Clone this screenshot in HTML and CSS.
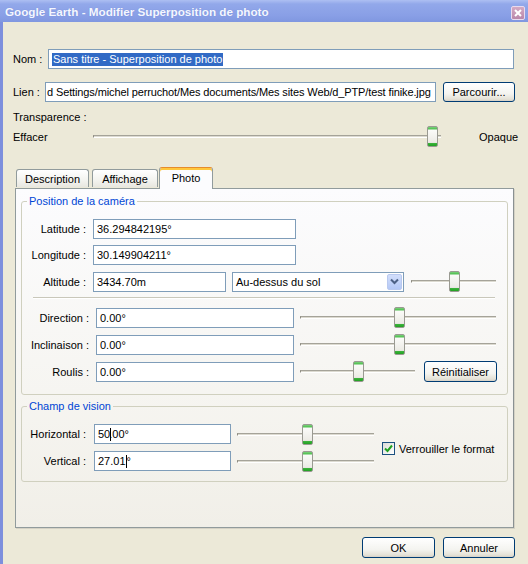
FILE: index.html
```html
<!DOCTYPE html>
<html lang="fr">
<head>
<meta charset="UTF-8" />
<title>Google Earth - Modifier Superposition de photo</title>
<link rel="stylesheet" href="styles.css">
</head>
<body>
  <div class="window">
    <div class="titlebar">
      <span class="title">Google Earth - Modifier Superposition de photo</span>
      <span class="close">
        <svg width="8" height="8" viewBox="0 0 8 8"><path d="M1 1 L7 7 M7 1 L1 7" stroke="#fff" stroke-width="2" /></svg>
      </span>
    </div>

    <div class="frame">
      <div class="row row-nom">
        <span class="lbl lbl-nom">Nom :</span>
        <div class="field field-nom"><span class="selected">Sans titre - Superposition de photo</span></div>
      </div>

      <div class="row row-lien">
        <span class="lbl lbl-lien">Lien :</span>
        <div class="field field-lien"><span>d Settings/michel perruchot/Mes documents/Mes sites Web/d_PTP/test finike.jpg</span></div>
        <div class="btn btn-browse">Parcourir...</div>
      </div>

      <div class="transp">Transparence :</div>

      <div class="row row-opacity">
        <span class="lbl lbl-effacer">Effacer</span>
        <div class="slider slider-opacity"><div class="track"></div><div class="thumb" style="left: 334px"></div></div>
        <span class="opaque">Opaque</span>
      </div>

      <div class="tabs">
        <div class="tab tab-desc">Description</div>
        <div class="tab tab-aff">Affichage</div>
        <div class="tab tab-photo active">Photo</div>
      </div>

      <div class="panel">
        <fieldset class="group group-cam">
          <legend>Position de la caméra</legend>

          <div class="row row-cam">
            <span class="lbl lbl-cam">Latitude :</span>
            <div class="field field-coord">36.294842195°</div>
          </div>
          <div class="row row-cam">
            <span class="lbl lbl-cam">Longitude :</span>
            <div class="field field-coord">30.149904211°</div>
          </div>
          <div class="row row-cam row-alt">
            <span class="lbl lbl-cam">Altitude :</span>
            <div class="field field-alt">3434.70m</div>
            <div class="field combo">
              <span>Au-dessus du sol</span>
              <span class="combo-btn">
                <svg width="9" height="7" viewBox="0 0 9 7"><path d="M1 1.5 L4.5 5 L8 1.5" fill="none" stroke="#4d6185" stroke-width="2" /></svg>
              </span>
            </div>
            <div class="slider slider-alt"><div class="track"></div><div class="thumb" style="left: 38px"></div></div>
          </div>

          <div class="sep"></div>

          <div class="row row-orient">
            <span class="lbl lbl-orient">Direction :</span>
            <div class="field field-orient">0.00°</div>
            <div class="slider slider-orient"><div class="track"></div><div class="thumb" style="left: 94px"></div></div>
          </div>
          <div class="row row-orient">
            <span class="lbl lbl-orient">Inclinaison :</span>
            <div class="field field-orient">0.00°</div>
            <div class="slider slider-orient"><div class="track"></div><div class="thumb" style="left: 94px"></div></div>
          </div>
          <div class="row row-orient">
            <span class="lbl lbl-orient">Roulis :</span>
            <div class="field field-orient">0.00°</div>
            <div class="slider slider-roll"><div class="track"></div><div class="thumb" style="left: 53px"></div></div>
            <div class="btn btn-reset">Réinitialiser</div>
          </div>
        </fieldset>

        <fieldset class="group group-fov">
          <legend>Champ de vision</legend>
          <div class="fov-grid">
            <span class="lbl lbl-fov">Horizontal :</span>
            <div class="field field-fov">50<span class="caret caret-h"></span>.00°</div>
            <div class="slider slider-fov"><div class="track"></div><div class="thumb" style="left: 65px"></div></div>

            <span class="lbl lbl-fov">Vertical :</span>
            <div class="field field-fov">27.01<span class="caret"></span>°</div>
            <div class="slider slider-fov"><div class="track"></div><div class="thumb" style="left: 65px"></div></div>

            <label class="check">
              <span class="box">
                <svg width="9" height="9" viewBox="0 0 9 9"><path d="M1 4.5 L3.5 7 L8 1.5" fill="none" stroke="#21a121" stroke-width="2" /></svg>
              </span>
              Verrouiller le format
            </label>
          </div>
        </fieldset>
      </div>

      <div class="footer">
        <div class="btn btn-ok">OK</div>
        <div class="btn btn-cancel">Annuler</div>
      </div>
    </div>
  </div>
</body>
</html>
```

FILE: styles.css
```css
body {
  margin: 0;
  font-family: "Liberation Sans", Arial, sans-serif;
  font-size: 11px;
  color: #000;
  background: #ece9d8;
}

.window {
  width: 528px;
  height: 564px;
  display: flex;
  flex-direction: column;
  overflow: hidden;
}

.titlebar {
  height: 22px;
  flex-shrink: 0;
  display: flex;
  align-items: center;
  justify-content: space-between;
  padding: 0 3px 0 5px;
  background: linear-gradient(#adbff2, #92a8ea 4px, #899fe6 70%, #8097e0);
}

.title {
  color: #f4f7ff;
  font-weight: bold;
  font-size: 11.7px;
  text-shadow: 0 0 1px #7387d3;
}

.close {
  width: 12px;
  height: 12px;
  margin-top: 3px;
  display: flex;
  align-items: center;
  justify-content: center;
  background: linear-gradient(#d4aac4, #b987aa);
  border: 1px solid #e9dbee;
  border-radius: 2px;
}

.frame {
  flex: 1;
  border-left: 3px solid #7d8fdd;
  padding: 0 14px 0 10px;
}

.row {
  display: flex;
  align-items: center;
}

.lbl {
  flex-shrink: 0;
  white-space: nowrap;
}

.field {
  height: 20px;
  box-sizing: border-box;
  border: 1px solid #7f9db9;
  background: #fff;
  padding: 0 3px;
  display: flex;
  align-items: center;
  white-space: nowrap;
  overflow: hidden;
  flex-shrink: 0;
}

.btn {
  box-sizing: border-box;
  height: 21px;
  border: 1px solid #003c74;
  border-radius: 3px;
  background: linear-gradient(#ffffff, #f4f4f0 60%, #e4e1d6 90%, #d6d0c5);
  display: flex;
  align-items: center;
  justify-content: center;
  flex-shrink: 0;
}

/* haut du dialogue */
.row-nom { margin-top: 27px; height: 20px; }
.lbl-nom { width: 35px; }
.field-nom { flex: 1; padding-left: 3px; }
.selected {
  background: #316ac5;
  color: #fff;
  line-height: 13px;
  padding: 0 1px;
}

.row-lien { margin-top: 13px; height: 20px; }
.lbl-lien { width: 32px; }
.field-lien {
  width: 391px;
  padding-left: 1px;
  letter-spacing: -0.12px;
}
.btn-browse { width: 72px; height: 20px; margin-left: 7px; }

.transp {
  margin-top: 9px;
  line-height: 13px;
}

.row-opacity { margin-top: 2px; height: 21px; }
.lbl-effacer { width: 80px; }
.slider-opacity { width: 348px; }
.opaque { margin-left: 38px; }

/* curseurs */
.slider {
  position: relative;
  height: 21px;
  flex-shrink: 0;
  display: flex;
  align-items: center;
}

.track {
  width: 100%;
  height: 1px;
  border-top: 1px solid #a5a399;
  border-bottom: 1px solid #fff;
  border-left: 1px solid #8d8b82;
  background: #dcdad0;
}

.thumb {
  position: absolute;
  top: 0;
  width: 11px;
  height: 21px;
  box-sizing: border-box;
  border: 1px solid #9a9a92;
  border-radius: 2px;
  background: linear-gradient(#7bd07b 0, #4fbf4f 2px, #fbfbf9 3px, #ecebe5 80%, #e0dfd8 calc(100% - 3px), #3fb43f calc(100% - 3px), #21a121);
}

/* onglets */
.tabs {
  margin-top: 20px;
  margin-left: 3px;
  height: 21px;
  display: flex;
  align-items: flex-end;
  position: relative;
  z-index: 1;
}

.tab {
  box-sizing: border-box;
  height: 18px;
  border: 1px solid #919b9c;
  border-bottom: none;
  border-radius: 3px 3px 0 0;
  background: linear-gradient(#ffffff, #f3f3ef 60%, #e8e7e0);
  display: flex;
  align-items: center;
  justify-content: center;
  margin-bottom: 1px;
}

.tab-desc { width: 73px; }
.tab-aff { width: 66px; margin-left: 3px; }
.tab-photo { width: 54px; margin-left: 1px; }

.tab.active {
  height: 22px;
  margin-bottom: -1px;
  background: #fcfcfe;
  border-top: 1px solid #e68b2c;
  box-shadow: inset 0 2px #ffc73c;
  padding-bottom: 2px;
}

.panel {
  margin-left: 2px;
  height: 340px;
  box-sizing: border-box;
  border: 1px solid #919b9c;
  border-right-color: #8a9192;
  background: linear-gradient(#fcfcfe, #f6f5f1 60%, #f1efe8);
  padding: 6px 5px 0 5px;
  box-shadow: 1px 1px 0 #d5d2c5;
}

/* cadres */
.group {
  margin: 0;
  padding: 0;
  border: 1px solid #d0d0bf;
  border-radius: 3px;
  min-width: 0;
}

.group legend {
  margin-left: 5px;
  padding: 0 2px;
  line-height: 13px;
  color: #0046d5;
}

.group-cam { padding-bottom: 12px; }

.row-cam { height: 20px; margin-top: 6px; }
.row-cam:first-of-type { margin-top: 11px; }
.row-alt { height: 21px; }
.lbl-cam { width: 64px; text-align: right; }
.field-coord { width: 203px; margin-left: 7px; }
.field-alt { width: 133px; margin-left: 7px; }

.combo {
  width: 172px;
  margin-left: 6px;
  justify-content: space-between;
  padding-right: 1px;
}

.combo-btn {
  width: 15px;
  height: 16px;
  box-sizing: border-box;
  border: 1px solid #b9c9ef;
  border-radius: 2px;
  background: linear-gradient(#d2defb, #b4c8f6);
  display: flex;
  align-items: center;
  justify-content: center;
}

.slider-alt { width: 85px; margin-left: 7px; }

.sep {
  margin: 5px 12px 0 11px;
  border-top: 1px solid #c9c7ba;
  border-bottom: 1px solid #fff;
}

.row-orient { height: 21px; margin-top: 6px; }
.sep + .row-orient { margin-top: 8px; }
.lbl-orient { width: 67px; text-align: right; }
.field-orient { width: 198px; margin-left: 7px; }
.slider-orient { width: 196px; margin-left: 6px; }
.slider-roll { width: 115px; margin-left: 6px; }
.btn-reset { width: 73px; margin-left: 9px; }

.group-fov {
  margin-top: 5px;
  padding-bottom: 10px;
}

.fov-grid {
  display: grid;
  grid-template-columns: 64px 137px 137px auto;
  grid-template-rows: 20px 20px;
  row-gap: 7px;
  margin-top: 11px;
  align-items: center;
}

.lbl-fov { text-align: right; }
.field-fov { margin-left: 8px; width: 137px; }
.slider-fov { margin-left: 14px; width: 137px; }

.caret {
  display: inline-block;
  width: 1px;
  height: 13px;
  background: #000;
}

.caret-h { margin-right: -2px; }

.check {
  grid-column: 4;
  grid-row: 1 / span 2;
  display: flex;
  align-items: center;
  margin-left: 22px;
  margin-top: 2px;
}

.box {
  width: 13px;
  height: 13px;
  box-sizing: border-box;
  border: 1px solid #1c5180;
  background: linear-gradient(135deg, #dcdcd7, #ffffff);
  display: flex;
  align-items: center;
  justify-content: center;
  margin-right: 4px;
}

/* boutons du bas */
.footer {
  margin-top: 9px;
  display: flex;
  justify-content: flex-end;
  margin-right: -1px;
}

.btn-ok { width: 73px; }
.btn-cancel { width: 72px; margin-left: 8px; }
```
